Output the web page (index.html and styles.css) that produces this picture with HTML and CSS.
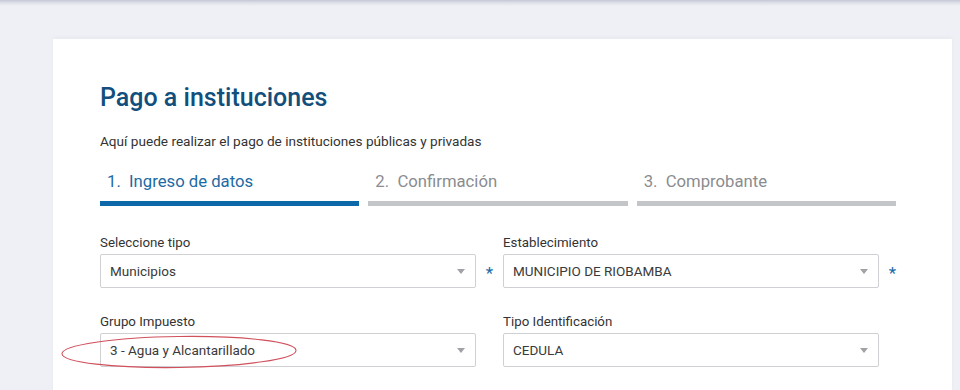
FILE: index.html
```html
<!DOCTYPE html>
<html lang="es">
<head>
    <meta charset="UTF-8">
    <meta name="viewport" content="width=device-width, initial-scale=1.0">
    <title>Pago a instituciones</title>
    <link rel="stylesheet" href="styles.css">
</head>
<body>
    <div class="topbar"></div>
    <div class="card">
        <h1>Pago a instituciones</h1>
        <p class="intro">Aquí puede realizar el pago de instituciones públicas y privadas</p>
        <div class="steps">
            <div class="step active">1.&nbsp; Ingreso de datos</div>
            <div class="step">2.&nbsp; Confirmación</div>
            <div class="step">3.&nbsp; Comprobante</div>
        </div>
        <div class="form">
            <div class="field">
                <label>Seleccione tipo</label>
                <div class="control">
                    <div class="select">Municipios<span class="arrow"></span></div>
                    <span class="req">*</span>
                </div>
            </div>
            <div class="field">
                <label>Establecimiento</label>
                <div class="control">
                    <div class="select">MUNICIPIO DE RIOBAMBA<span class="arrow"></span></div>
                    <span class="req">*</span>
                </div>
            </div>
            <div class="field">
                <label>Grupo Impuesto</label>
                <div class="control marked">
                    <div class="select">3 - Agua y Alcantarillado<span class="arrow"></span></div>
                    <span class="req"></span>
                    <svg class="circle" width="244" height="40" viewBox="0 0 244 40">
                        <ellipse cx="122" cy="20" rx="117" ry="15.5" fill="none" stroke="#d0505c" stroke-width="1.1" transform="rotate(-0.8 122 20)"/>
                    </svg>
                </div>
            </div>
            <div class="field">
                <label>Tipo Identificación</label>
                <div class="control">
                    <div class="select">CEDULA<span class="arrow"></span></div>
                    <span class="req"></span>
                </div>
            </div>
        </div>
    </div>
</body>
</html>
```

FILE: styles.css
```css
body {
    margin: 0;
    background-color: #eff0f5;
    font-family: Roboto, 'Noto Sans', sans-serif;
    color: #333;
    overflow: hidden;
}
.topbar {
    height: 6px;
    background: linear-gradient(#c5c8d6, #dfe1ea 50%, #eff0f5);
}
.card {
    margin: 33px 8px 0 53px;
    padding: 43px 56px 0 47px;
    background: white;
    box-shadow: 0 -2px 4px rgba(0, 0, 0, 0.03);
    height: 320px;
}
h1 {
    margin: 0;
    font-size: 25px;
    font-weight: 500;
    line-height: 32px;
    color: #124f7c;
}
.intro {
    margin: 18px 0 0;
    font-size: 13.6px;
    line-height: 18px;
    color: #333;
}
.steps {
    display: grid;
    grid-template-columns: repeat(3, 1fr);
    gap: 9px;
    margin-top: 22px;
}
.step {
    padding: 0 0 9px 7px;
    font-size: 16.7px;
    line-height: 20px;
    color: #8a8c90;
    border-bottom: 5px solid #c3c5c9;
}
.step.active {
    color: #1d6aa4;
    border-bottom-color: #0d68a9;
}
.form {
    display: grid;
    grid-template-columns: 403px 403px;
    row-gap: 26px;
    margin-top: 29px;
}
.field label {
    display: block;
    font-size: 13.3px;
    line-height: 16px;
    margin-bottom: 3px;
    color: #333;
}
.control {
    display: flex;
    align-items: center;
    position: relative;
}
.select {
    flex: 1;
    height: 34px;
    box-sizing: border-box;
    border: 1px solid #cfd0d3;
    border-radius: 2px;
    padding: 0 10px 0 9px;
    display: flex;
    align-items: center;
    justify-content: space-between;
    font-size: 13.5px;
    color: #3a3a3a;
}
.arrow {
    width: 0;
    height: 0;
    border-left: 4px solid transparent;
    border-right: 4px solid transparent;
    border-top: 5px solid #a0a2a6;
}
.req {
    width: 27px;
    text-align: center;
    color: #1a6aa8;
    font-size: 17px;
    padding-top: 4px;
}
.circle {
    position: absolute;
    left: -43px;
    top: -1px;
}
```
